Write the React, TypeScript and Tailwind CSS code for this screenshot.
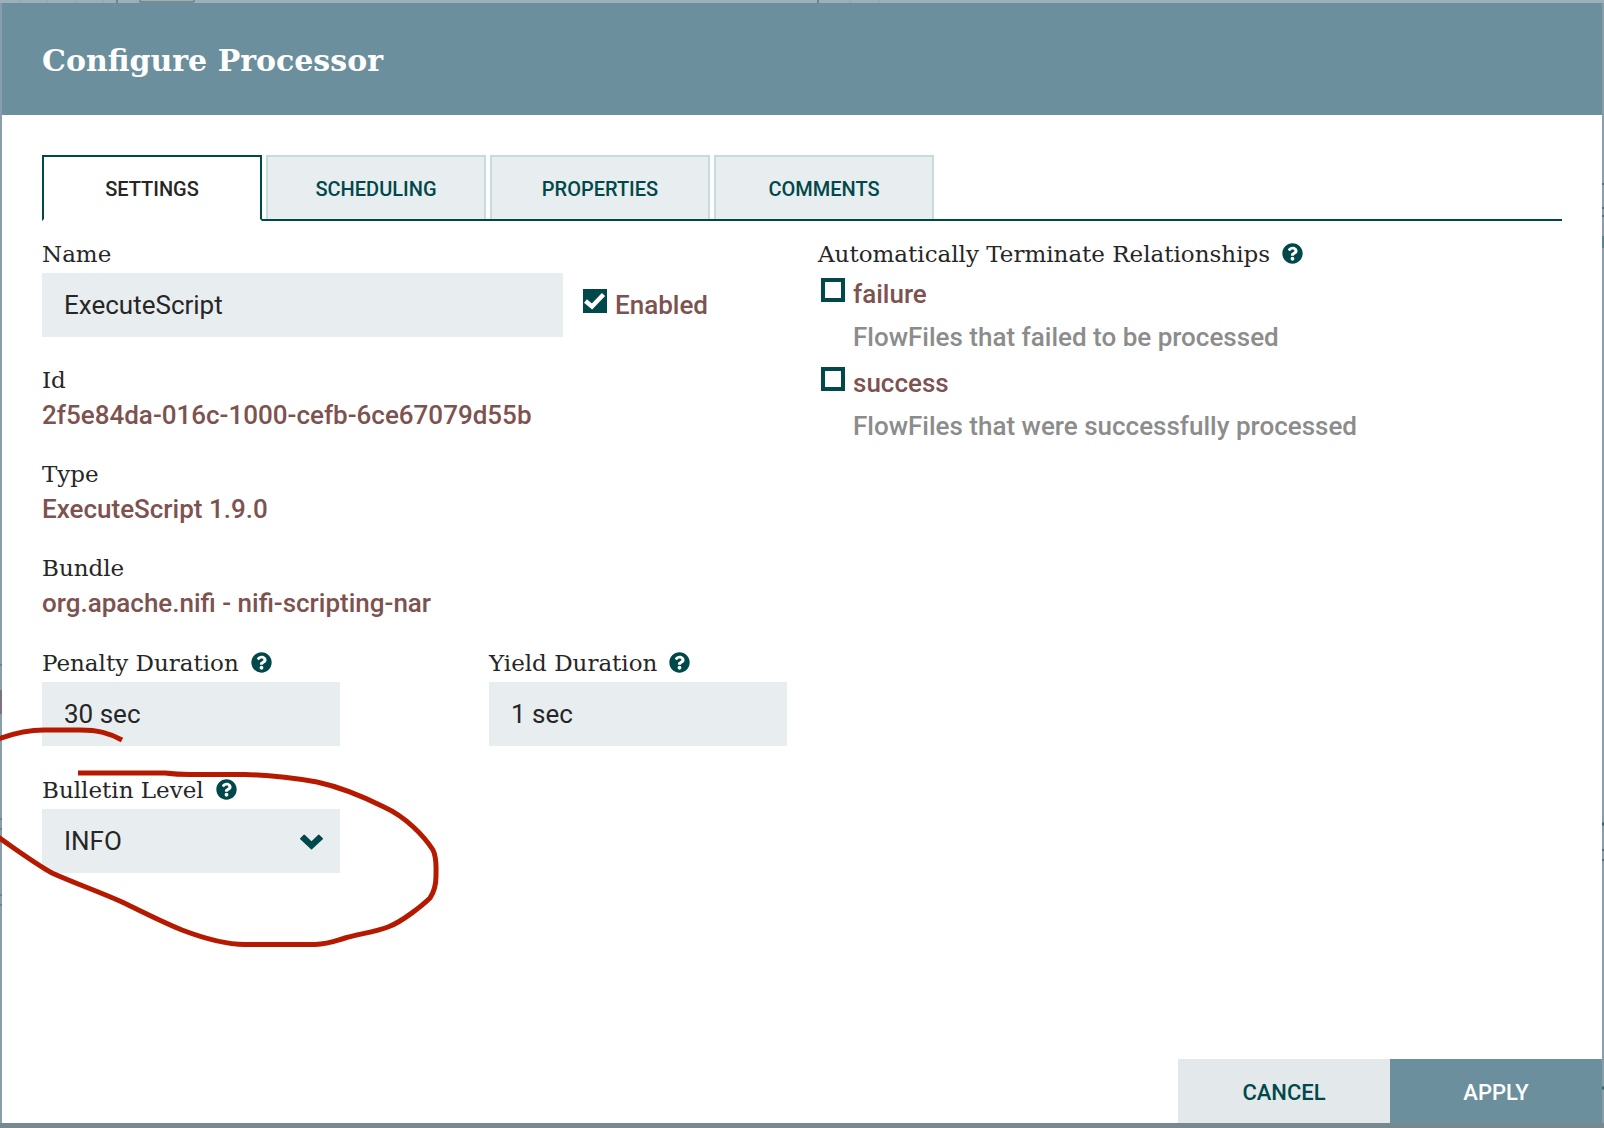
import React, { useState } from 'react'
import { FaQuestionCircle } from 'react-icons/fa'

const TABS = ['Settings', 'Scheduling', 'Properties', 'Comments']

const DETAILS = [
  { label: 'Id', value: '2f5e84da-016c-1000-cefb-6ce67079d55b' },
  { label: 'Type', value: 'ExecuteScript 1.9.0' },
  { label: 'Bundle', value: 'org.apache.nifi - nifi-scripting-nar' },
]

const RELATIONSHIPS = [
  { name: 'failure', description: 'FlowFiles that failed to be processed' },
  { name: 'success', description: 'FlowFiles that were successfully processed' },
]

const SLAB = "font-['Roboto_Slab','DejaVu_Serif',serif]"
const LABEL = `${SLAB} pb-[2px] text-[23px] leading-[30px] text-[#262626]`
const FIELD =
  'h-16 w-full appearance-none rounded-none bg-[#e8edef] px-[22px] text-[26px] text-[#262626] outline-none'

function Help({ label }: { label: string }) {
  return (
    <button type="button" aria-label={`Help: ${label}`} className="pb-[3px] text-[#004849]">
      <FaQuestionCircle size={21} />
    </button>
  )
}

function CheckBox({ id, defaultChecked }: { id: string; defaultChecked?: boolean }) {
  return (
    <span className="grid h-6 w-6 shrink-0">
      <input
        id={id}
        type="checkbox"
        defaultChecked={defaultChecked}
        className="peer col-start-1 row-start-1 h-6 w-6 appearance-none border-4 border-[#004849] bg-white checked:bg-[#004849]"
      />
      <svg
        viewBox="0 0 24 24"
        className="pointer-events-none invisible col-start-1 row-start-1 h-6 w-6 peer-checked:visible"
        fill="none"
        stroke="#fff"
        strokeWidth="4.500"
      >
        <path d="M2.500 12 9 17.500 20.500 5.500" />
      </svg>
    </span>
  )
}

/** Slivers of the flow canvas that stay visible around the dialog. */
function Canvas() {
  return (
    <svg aria-hidden="true" className="absolute inset-0 h-full w-full" viewBox="0 0 1604 1128" preserveAspectRatio="none">
      <rect width="1604" height="1128" fill="#889eaa" />
      <rect width="1604" height="3" fill="#9bb0b9" />
      <rect y="1123" width="1604" height="5" fill="#77898f" />
      <path d="M20 0V3M47 0V3M75 0V3M103 0V3M850 0V3M879 0V3" stroke="#90a6b0" strokeWidth="1" />
      <path d="M117 0V3M818 0V3" stroke="#708389" strokeWidth="2" />
      <path d="M140 0V1Q140 2 142 2H192Q194 2 194 1V0" stroke="#7b8a90" strokeWidth="2" fill="none" />
      <rect y="690" width="2" height="24" fill="#80727c" />
      <path d="M0 665H2M0 819H2M0 829H2M0 895H2M0 905H2" stroke="#566c77" strokeWidth="1" />
      <path d="M1602 184H1604M1602 208H1604M1602 216H1604M1602 850H1604M1602 860H1604" stroke="#566c77" strokeWidth="2" />
      <rect x="1602" y="236" width="2" height="12" fill="#5b858a" />
      <path d="M1602 824H1604M1602 1088H1604" stroke="#2f6c6b" strokeWidth="3" />
    </svg>
  )
}

export default function App() {
  const [tab, setTab] = useState('Settings')

  return (
    <div className="relative min-h-screen overflow-hidden px-[2px] pt-[3px] pb-[5px] font-[Roboto,sans-serif]">
      <Canvas />
      <div className="relative flex min-h-[calc(100vh-8px)] flex-col bg-white">
        <header className="flex h-28 items-center bg-[#6b8f9d] px-10">
          <h1 className={`${SLAB} pt-1 text-[30px] leading-10 font-bold text-white`}>Configure Processor</h1>
        </header>

        <main className="flex-1 px-10 pt-10">
          <div role="tablist" className="flex">
            {TABS.map((t) => (
              <React.Fragment key={t}>
                <button
                  type="button"
                  role="tab"
                  aria-selected={t === tab}
                  onClick={() => setTab(t)}
                  className={
                    t === tab
                      ? 'h-[66px] w-[220px] border-2 border-[#004849] border-b-white bg-white pt-[2px] text-xl font-medium text-[#262626] uppercase'
                      : 'h-[66px] w-[220px] border-b-2 border-[#004849] text-xl font-medium text-[#004849] uppercase'
                  }
                >
                  {t === tab ? (
                    t
                  ) : (
                    <span className="flex h-16 items-center justify-center border-2 border-b-0 border-[#c7dbdb] bg-[#e8edef] pt-[2px]">
                      {t}
                    </span>
                  )}
                </button>
                <span className="w-1 border-b-2 border-[#004849]" />
              </React.Fragment>
            ))}
            <span className="flex-1 border-b-2 border-[#004849]" />
          </div>

          <div className="flex pt-[18px]">
            <section className="w-[776px] shrink-0">
              <label htmlFor="name" className={`${LABEL} block`}>
                Name
              </label>
              <div className="flex pt-[2px]">
                <div className="w-[521px]">
                  <input id="name" type="text" defaultValue="ExecuteScript" className={FIELD} />
                </div>
                <div className="flex gap-2 pt-4 pl-5">
                  <CheckBox id="enabled" defaultChecked />
                  <label htmlFor="enabled" className="text-[26px] leading-8 font-medium text-[#7d524f]">
                    Enabled
                  </label>
                </div>
              </div>

              <dl className="flex flex-col gap-[26px] pt-7">
                {DETAILS.map((d) => (
                  <div key={d.label}>
                    <dt className={LABEL}>{d.label}</dt>
                    <dd className="text-[26px] leading-9 font-medium text-[#7d524f]">{d.value}</dd>
                  </div>
                ))}
              </dl>

              <div className="flex gap-[149px] pt-[27px]">
                <div className="w-[298px]">
                  <div className="flex items-center gap-3">
                    <label htmlFor="penalty" className={LABEL}>
                      Penalty Duration
                    </label>
                    <Help label="Penalty Duration" />
                  </div>
                  <div className="pt-[2px]">
                    <input id="penalty" type="text" defaultValue="30 sec" className={FIELD} />
                  </div>
                </div>
                <div className="w-[298px]">
                  <div className="flex items-center gap-3">
                    <label htmlFor="yield" className={LABEL}>
                      Yield Duration
                    </label>
                    <Help label="Yield Duration" />
                  </div>
                  <div className="pt-[2px]">
                    <input id="yield" type="text" defaultValue="1 sec" className={FIELD} />
                  </div>
                </div>
              </div>

              <div className="w-[298px] pt-[29px]">
                <div className="flex items-center gap-3">
                  <label htmlFor="bulletin" className={LABEL}>
                    Bulletin Level
                  </label>
                  <Help label="Bulletin Level" />
                </div>
                <div className="grid items-center pt-[2px]">
                  <select id="bulletin" defaultValue="INFO" className={`${FIELD} col-start-1 row-start-1`}>
                    <option>DEBUG</option>
                    <option>INFO</option>
                    <option>WARN</option>
                    <option>ERROR</option>
                  </select>
                  <svg
                    viewBox="0 0 24 24"
                    className="pointer-events-none col-start-1 row-start-1 mr-4 h-6 w-6 justify-self-end"
                    fill="#004849"
                  >
                    <path d="M0.200 9.200 3.700 5.700Q4.200 5.300 4.700 5.700L11.500 12.200 18.300 5.700Q18.800 5.300 19.300 5.700L22.800 9.200Q23.200 9.700 22.800 10.200L12 20.200Q11.500 20.600 11 20.200L0.200 10.200Q-0.200 9.700 0.200 9.200Z" />
                  </svg>
                </div>
              </div>
            </section>

            <section className="flex-1">
              <div className="flex items-center gap-3">
                <h2 className={LABEL}>Automatically Terminate Relationships</h2>
                <Help label="Automatically Terminate Relationships" />
              </div>
              {RELATIONSHIPS.map((r) => (
                <div key={r.name} className="flex h-[89px] gap-2 pt-[7px] pl-[3px]">
                  <CheckBox id={r.name} />
                  <div className="text-[26px] font-medium">
                    <label htmlFor={r.name} className="block leading-8 text-[#7d524f]">
                      {r.name}
                    </label>
                    <p className="pt-[11px] leading-8 text-[#8c8c8c]">{r.description}</p>
                  </div>
                </div>
              ))}
            </section>
          </div>
        </main>

        <footer className="flex justify-end">
          <button type="button" className="h-16 w-[212px] bg-[#e3e8eb] pt-[2px] text-[22px] font-medium text-[#004849]">
            CANCEL
          </button>
          <button type="button" className="h-16 w-[212px] bg-[#6b8f9d] pt-[2px] text-[22px] font-medium text-white">
            APPLY
          </button>
        </footer>
      </div>

      {/* hand-drawn circle around the bulletin level */}
      <svg
        aria-hidden="true"
        className="pointer-events-none absolute top-[720px] left-0 h-[240px] w-[450px]"
        viewBox="0 720 450 240"
        fill="none"
        stroke="#b51a00"
        strokeWidth="5"
      >
        <path d="M-2 739C12 734 28 730 44 730H80C98 730 109 733 122 740" />
        <path d="M78 773H165C173 774 180 774.500 190 774.500H245C270 775 300 779 317 782C340 787 362 796 384 807C406 817 424 836 433 850C437 858 436 866 436 876C436 886 434 892 430 898C424 904 402 922 388 927C375 932 358 934 345 938C335 941 328 944 315 944.500H245C225 944.500 203 938 182 930C160 921 143 912 122 902C100 892 74 883 52 873C34 863 14 848 -2 837" />
      </svg>
    </div>
  )
}
